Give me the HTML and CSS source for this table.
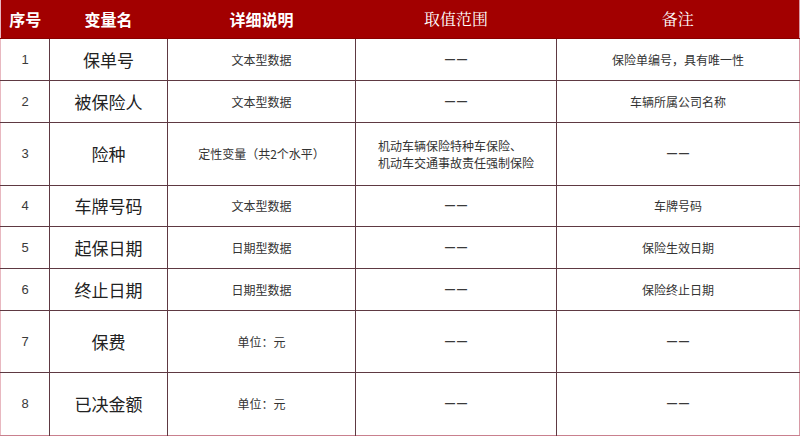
FILE: index.html
```html
<!DOCTYPE html>
<html lang="zh-CN">
<head>
<meta charset="utf-8">
<link rel="stylesheet" href="styles.css">
</head>
<body>
<table class="vars">
  <colgroup>
    <col class="c1"><col class="c2"><col class="c3"><col class="c4"><col class="c5">
  </colgroup>
  <thead>
    <tr class="head">
      <th class="hs">序号</th>
      <th class="hs">变量名</th>
      <th class="hs">详细说明</th>
      <th class="hr">取值范围</th>
      <th class="hr">备注</th>
    </tr>
  </thead>
  <tbody>
    <tr class="r42"><td class="num">1</td><td class="name">保单号</td><td>文本型数据</td><td class="dash">——</td><td>保险单编号，具有唯一性</td></tr>
    <tr class="r42"><td class="num">2</td><td class="name">被保险人</td><td>文本型数据</td><td class="dash">——</td><td>车辆所属公司名称</td></tr>
    <tr class="r63"><td class="num">3</td><td class="name">险种</td><td>定性变量（共2个水平）</td><td><span class="multi">机动车辆保险特种车保险、<br>机动车交通事故责任强制保险</span></td><td class="dash">——</td></tr>
    <tr class="r41"><td class="num">4</td><td class="name">车牌号码</td><td>文本型数据</td><td class="dash">——</td><td>车牌号码</td></tr>
    <tr class="r42"><td class="num">5</td><td class="name">起保日期</td><td>日期型数据</td><td class="dash">——</td><td>保险生效日期</td></tr>
    <tr class="r42"><td class="num">6</td><td class="name">终止日期</td><td>日期型数据</td><td class="dash">——</td><td>保险终止日期</td></tr>
    <tr class="r62"><td class="num">7</td><td class="name">保费</td><td>单位：元</td><td class="dash">——</td><td class="dash">——</td></tr>
    <tr class="r63"><td class="num">8</td><td class="name">已决金额</td><td>单位：元</td><td class="dash">——</td><td class="dash">——</td></tr>
  </tbody>
</table>
</body>
</html>
```

FILE: styles.css
```css
html, body {
  margin: 0;
  padding: 0;
  background: #ffffff;
}
body {
  font-family: "Noto Sans CJK SC", "Noto Sans", sans-serif;
  color: #333333;
}
.vars {
  border-collapse: collapse;
  table-layout: fixed;
  width: 799px;
  border-left: 1px solid #e8b8c0;
  border-right: 1px solid #d89aa6;
  border-bottom: 1px solid #c9808e;
}
.c1 { width: 49px; }
.c2 { width: 118px; }
.c3 { width: 188px; }
.c4 { width: 201px; }
.c5 { width: 243px; }
.head {
  height: 38px;
  background: #a20000;
}
.head th {
  color: #ffffff;
  font-size: 16px;
  padding: 0;
  text-align: center;
  vertical-align: middle;
  border: none;
  border-bottom: 1px solid #8a0000;
}
.hs { font-weight: 700; }
.hr { font-weight: 400; font-family: "Noto Serif CJK SC", "Liberation Serif", serif; }
td {
  border: 1px solid #5e3942;
  padding: 0;
  text-align: center;
  vertical-align: middle;
  font-size: 12px;
  line-height: 17px;
  color: #333333;
}
tr td:first-child { border-left: none; }
tr td:last-child { border-right: none; }
tbody tr:last-child td { border-bottom: none; }
.num { font-size: 13px; color: #3a3a3a; font-family: "Liberation Sans", sans-serif; }
.name { font-size: 17px; color: #222222; }
.dash {
  font-family: "Liberation Sans", sans-serif;
  font-variant-ligatures: none;
  color: #3a3a3a;
  font-size: 10px;
  font-weight: 700;
  letter-spacing: 2px;
  padding-left: 2px;
}
.multi { display: inline-block; text-align: left; }
.r42 { height: 42px; }
.r41 { height: 41px; }
.r62 { height: 62px; }
.r63 { height: 63px; }
```
